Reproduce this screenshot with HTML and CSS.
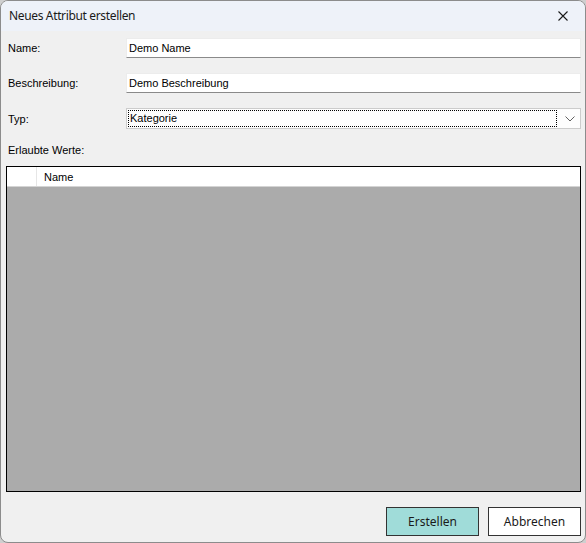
FILE: index.html
```html
<!DOCTYPE html>
<html lang="de">
<head>
  <meta charset="UTF-8">
  <meta name="viewport" content="width=device-width, initial-scale=1.0">
  <title>Neues Attribut erstellen</title>
  <link rel="stylesheet" href="styles.css">
</head>
<body>
  <div class="window">
    <div class="titlebar">
      <span class="title">Neues Attribut erstellen</span>
      <button class="close" title="Schließen">
        <svg width="10" height="10" viewBox="0 0 10 10">
          <path d="M0.5 0.5 L9.5 9.5 M9.5 0.5 L0.5 9.5" stroke="#1a1a1a" stroke-width="1.1" fill="none"/>
        </svg>
      </button>
    </div>

    <div class="content">
      <div class="row first">
        <label class="label">Name:</label>
        <input class="textbox" type="text" value="Demo Name">
      </div>
      <div class="row">
        <label class="label">Beschreibung:</label>
        <input class="textbox" type="text" value="Demo Beschreibung">
      </div>
      <div class="row combo-row">
        <label class="label">Typ:</label>
        <div class="combo">
          <span class="combo-text">Kategorie</span>
          <svg class="chevron" width="10" height="6" viewBox="0 0 10 6">
            <path d="M0.5 0.5 L5 5 L9.5 0.5" stroke="#606060" stroke-width="1" fill="none"/>
          </svg>
        </div>
      </div>

      <div class="label values-label">Erlaubte Werte:</div>

      <div class="grid">
        <div class="grid-head">
          <div class="row-header"></div>
          <div class="col-header">Name</div>
        </div>
        <div class="grid-body"></div>
      </div>

      <div class="actions">
        <button class="btn primary">Erstellen</button>
        <button class="btn">Abbrechen</button>
      </div>
    </div>
  </div>
</body>
</html>
```

FILE: styles.css
```css
* {
  margin: 0;
  padding: 0;
  box-sizing: border-box;
}

body {
  background-color: #cfcfcf;
  font-family: "Liberation Sans", Arial, sans-serif;
}

button, input {
  appearance: none;
  border: none;
  outline: none;
  font: inherit;
  background: none;
}

.window {
  width: 586px;
  height: 543px;
  border: 1px solid #8c8c8c;
  border-radius: 8px;
  background-color: #f0f0f0;
  overflow: hidden;
  display: flex;
  flex-direction: column;
}

.titlebar {
  height: 30px;
  flex: none;
  display: flex;
  align-items: center;
  justify-content: space-between;
  background-color: #eef2f9;
  padding-left: 8px;
}

.title {
  font-family: "Noto Sans", sans-serif;
  font-size: 12px;
  letter-spacing: -0.35px;
  color: #1a1a1a;
  padding-bottom: 1px;
}

.close {
  width: 46px;
  height: 30px;
  display: flex;
  align-items: center;
  justify-content: center;
  padding-left: 2px;
}

.content {
  flex: 1;
  display: flex;
  flex-direction: column;
  padding: 0 4px 6px 4px;
  font-size: 11px;
  color: #000;
}

.row {
  display: flex;
  align-items: center;
  height: 20px;
  margin-top: 15px;
}

.row.first {
  margin-top: 7px;
}

.label {
  width: 121px;
  padding-left: 3px;
  flex: none;
}

.textbox {
  flex: 1;
  height: 20px;
  background-color: #fff;
  border: 1px solid #ececec;
  border-bottom: 1px solid #8a8a8a;
  padding: 0 2px 1px 2px;
  color: #000;
}

.combo-row {
  height: 21px;
}

.combo {
  flex: 1;
  height: 21px;
  background-color: #fdfdfd;
  border: 1px solid #cccccc;
  display: flex;
  align-items: center;
  padding: 1px 0 1px 1px;
}

.combo-text {
  flex: 1;
  height: 17px;
  line-height: 15px;
  border: 1px dotted #000;
  padding-left: 1px;
}

.chevron {
  margin: 1px 5px 0 8px;
}

.values-label {
  margin-top: 15px;
  height: 12px;
}

.grid {
  margin-top: 10px;
  height: 326px;
  border: 1px solid #000;
  display: flex;
  flex-direction: column;
  margin-left: 1px;
}

.grid-head {
  height: 20px;
  display: flex;
  background-color: #fff;
  border-bottom: 1px solid #d4d4d4;
}

.row-header {
  width: 30px;
  border-right: 1px solid #e6e6e6;
}

.col-header {
  padding-left: 7px;
  line-height: 21px;
}

.grid-body {
  flex: 1;
  background-color: #ababab;
}

.actions {
  display: flex;
  justify-content: flex-end;
  gap: 9px;
  margin-top: 15px;
}

.btn {
  width: 93px;
  height: 29px;
  border: 1px solid #333;
  background-color: #fff;
  font-family: "Noto Sans", sans-serif;
  font-size: 12px;
  color: #1a1a1a;
}

.btn.primary {
  background-color: #a0dcd9;
}
```
